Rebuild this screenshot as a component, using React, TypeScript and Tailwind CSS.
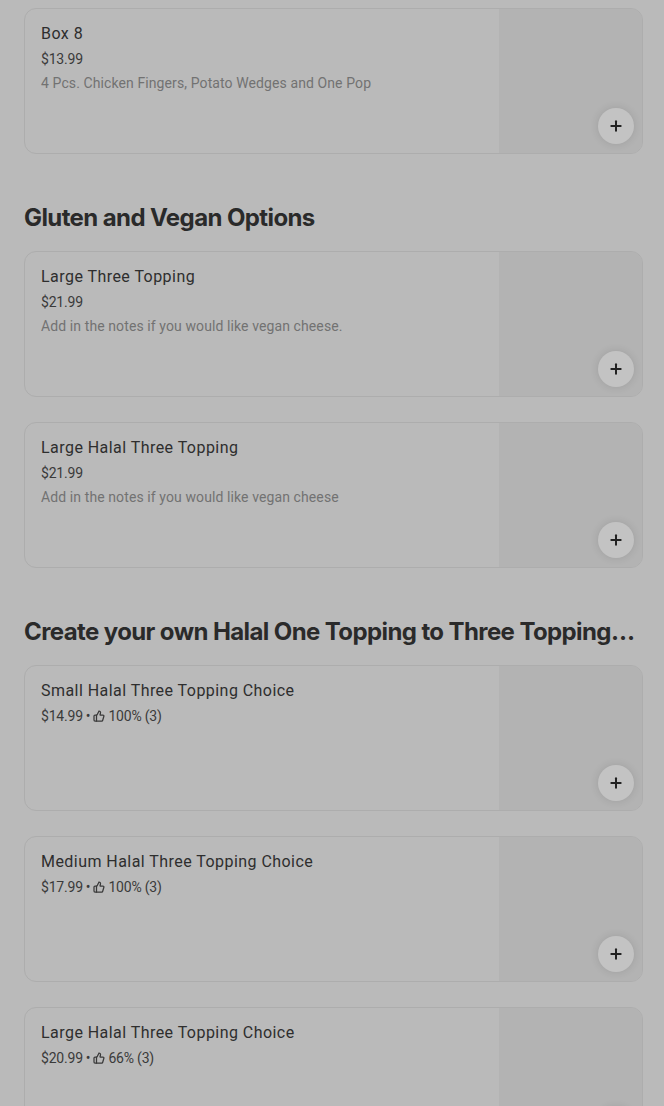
import { ThumbsUp, Plus } from "lucide-react";

type Item = {
  name: string;
  price: string;
  desc?: string;
  rating?: string;
};

const sections: { title?: string; items: Item[] }[] = [
  {
    items: [
      {
        name: "Box 8",
        price: "$13.99",
        desc: "4 Pcs. Chicken Fingers, Potato Wedges and One Pop",
      },
    ],
  },
  {
    title: "Gluten and Vegan Options",
    items: [
      {
        name: "Large Three Topping",
        price: "$21.99",
        desc: "Add in the notes if you would like vegan cheese.",
      },
      {
        name: "Large Halal Three Topping",
        price: "$21.99",
        desc: "Add in the notes if you would like vegan cheese",
      },
    ],
  },
  {
    title: "Create your own Halal One Topping to Three Topping Pizza",
    items: [
      { name: "Small Halal Three Topping Choice", price: "$14.99", rating: "100% (3)" },
      { name: "Medium Halal Three Topping Choice", price: "$17.99", rating: "100% (3)" },
      { name: "Large Halal Three Topping Choice", price: "$20.99", rating: "66% (3)" },
    ],
  },
];

function ItemCard({ item }: { item: Item }) {
  return (
    <div className="flex h-[146px] rounded-xl border border-[#adadad] overflow-hidden">
      <div className="flex-1 px-4 pt-[13px] min-w-0">
        <h3 className="text-base leading-6 text-[#2e2e2e] tracking-[0.45px]">{item.name}</h3>
        <div className="flex items-center text-sm leading-5 mt-[3px] text-[#3a3a3a] tracking-[-0.2px]">
          <span>{item.price}</span>
          {item.rating && (
            <>
              <span className="mx-[3px]">•</span>
              <ThumbsUp className="w-3 h-3 mr-[3px]" strokeWidth={2.5} />
              <span>{item.rating}</span>
            </>
          )}
        </div>
        {item.desc && (
          <p className="text-sm leading-5 mt-1 text-[#727272] tracking-[0.1px] truncate">
            {item.desc}
          </p>
        )}
      </div>
      <div className="relative w-[143px] bg-[#b3b3b3]">
        <button className="absolute right-2 bottom-[9px] w-9 h-9 rounded-full bg-[#c3c3c3] shadow-[0_0_8px_rgba(0,0,0,0.12)] flex items-center justify-center text-[#222]">
          <Plus className="w-4 h-4" strokeWidth={3} />
        </button>
      </div>
    </div>
  );
}

export default function App() {
  return (
    <div
      className="min-h-screen bg-[#bababa] pl-6 pr-[21px] pt-2 pb-10"
      style={{ fontFamily: "Roboto, 'Liberation Sans', sans-serif" }}
    >
      {sections.map((s, i) => (
        <section key={i} className={i > 0 ? "mt-12" : ""}>
          {s.title && (
            <h2
              className="text-2xl leading-8 font-bold text-[#2a2a2a] tracking-[-0.6px] mb-[17px] pr-2 truncate"
              style={{ fontFamily: "Inter, sans-serif" }}
            >
              {s.title}
            </h2>
          )}
          <div className="flex flex-col gap-[25px]">
            {s.items.map((it) => (
              <ItemCard key={it.name} item={it} />
            ))}
          </div>
        </section>
      ))}
    </div>
  );
}
